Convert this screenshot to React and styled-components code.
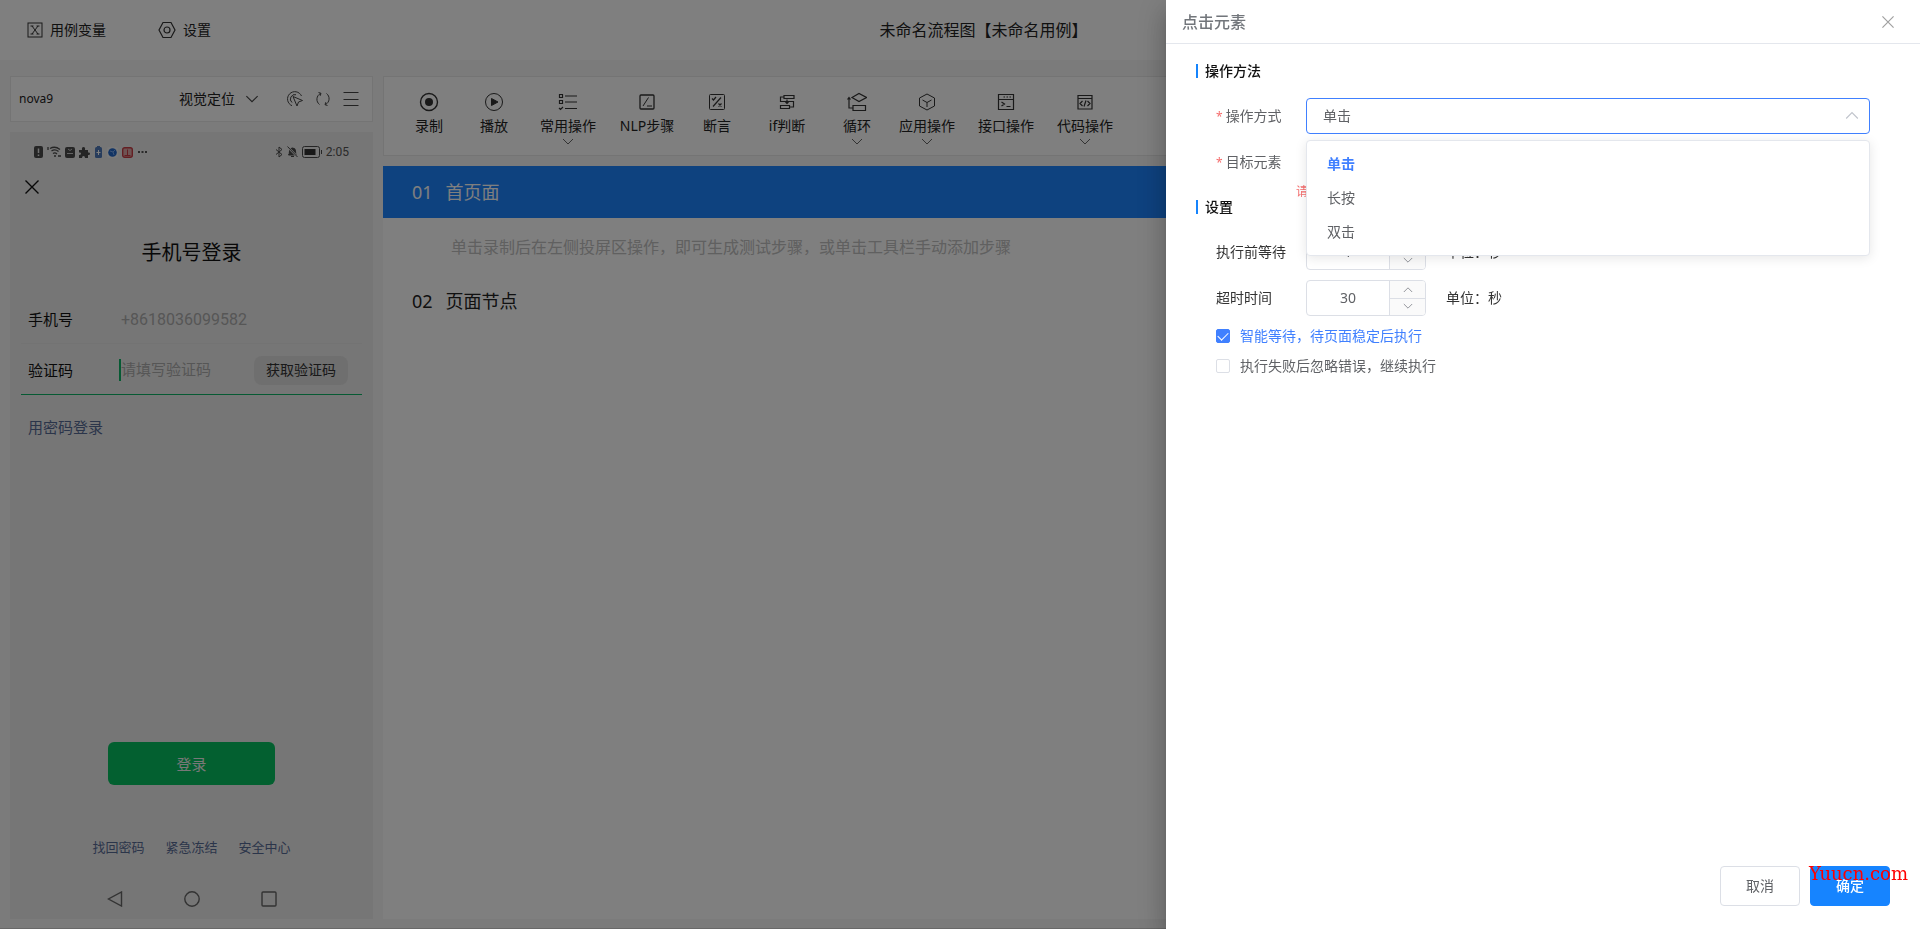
import React, { useState } from "react";
import styled, { createGlobalStyle } from "styled-components";

const GlobalStyle = createGlobalStyle`
  * {
    box-sizing: border-box;
  }
  body {
    margin: 0;
    font-family: "Noto Sans", "Noto Sans CJK SC", sans-serif;
    font-size: 14px;
    line-height: 20px;
    color: #222;
  }
  button, input, select {
    font-family: inherit;
    font-size: inherit;
    line-height: inherit;
    color: inherit;
    margin: 0;
    padding: 0;
    border: none;
    outline: none;
    background: none;
  }
  button {
    cursor: pointer;
  }
  a {
    text-decoration: none;
  }
  svg {
    display: block;
    flex-shrink: 0;
  }
`;

const Page = styled.div`
  display: flex;
  flex-direction: column;
  min-height: 100vh;
  background: #f6f6f6;
  border-bottom: 1px solid #d0d0d0;
`;

/* ---------- 顶部栏 ---------- */
const Header = styled.header`
  display: flex;
  align-items: center;
  justify-content: space-between;
  height: 60px;
  padding: 0 24px 0 27px;
  background: #fff;
`;

const HeaderSide = styled.div`
  display: flex;
  gap: 52px;
  min-width: 140px;
`;

const HeaderButton = styled.button`
  display: flex;
  align-items: center;
  gap: 7px;
`;

const FlowTitle = styled.h1`
  margin: 0;
  font-size: 16px;
  font-weight: 400;
`;

const Content = styled.div`
  flex: 1;
  display: flex;
  gap: 10px;
  padding: 16px 10px 9px;
`;

/* ---------- 投屏区 ---------- */
const DevicePanel = styled.aside`
  display: flex;
  flex-direction: column;
  gap: 10px;
  width: 363px;
`;

const DeviceBar = styled.div`
  display: flex;
  align-items: center;
  height: 46px;
  padding: 0 13px 0 8px;
  background: #fff;
  border: 1px solid #e8e8e8;
`;

const DeviceName = styled.span`
  flex: 1;
  font-size: 12px;
`;

const LocateButton = styled.button`
  display: flex;
  align-items: center;
  gap: 10px;
  margin-right: 28px;
`;

const DeviceTools = styled.div`
  display: flex;
  align-items: center;
  gap: 12px;
`;

const Phone = styled.section`
  flex: 1;
  display: flex;
  flex-direction: column;
  padding: 10px 11px 12px;
  background: #ececec;
  color: #111;
`;

const StatusBar = styled.div`
  display: flex;
  align-items: center;
  justify-content: space-between;
  height: 20px;
  padding: 0 13px;
  font-family: Roboto, sans-serif;
  font-size: 12px;
  color: #555;
`;

const StatusGroup = styled.div`
  display: flex;
  align-items: center;
  gap: 4px;
`;

const PhoneClose = styled.button`
  width: 14px;
  height: 24px;
  margin: 13px 0 0 4px;
`;

const PhoneTitle = styled.h2`
  margin: 40px 0 26px;
  font-size: 20px;
  line-height: 28px;
  font-weight: 400;
  text-align: center;
`;

const PhoneRow = styled.div`
  display: flex;
  align-items: center;
  height: 51px;
  padding: 2px 14px 0 7px;
  font-size: 15px;
  border-bottom: 1px solid ${({ $active }) => ($active ? "#0cb466" : "#e6e6e6")};
`;

const PhoneLabel = styled.label`
  width: 91px;
`;

const PhoneInput = styled.input`
  flex: 1;
  min-width: 0;
  height: 22px;
  font-family: Roboto, "Noto Sans CJK SC", sans-serif;
  font-size: ${({ $size }) => $size};
  color: #adadad;
  border-left: 2px solid ${({ $caret }) => ($caret ? "#0cb466" : "transparent")};
  &::placeholder {
    color: #adadad;
    opacity: 1;
  }
`;

const CodeButton = styled.button`
  width: 94px;
  height: 29px;
  border-radius: 8px;
  background: #dedede;
  font-size: 14px;
  color: #333;
`;

const PasswordLink = styled.a`
  margin: 22px 0 0 7px;
  font-size: 15px;
  color: #576b95;
`;

const LoginButton = styled.button`
  width: 167px;
  height: 43px;
  margin: auto auto 0;
  border-radius: 6px;
  background: #07c160;
  font-size: 15px;
  color: #f0f0f0;
`;

const PhoneLinks = styled.nav`
  display: flex;
  justify-content: center;
  gap: 21px;
  margin-top: 52px;
  font-size: 13px;
  a {
    color: #576b95;
  }
`;

const PhoneNav = styled.div`
  display: flex;
  justify-content: center;
  gap: 61px;
  margin-top: 34px;
`;

/* ---------- 流程区 ---------- */
const FlowPanel = styled.main`
  flex: 1;
  display: flex;
  flex-direction: column;
  gap: 10px;
`;

const ToolBar = styled.div`
  display: flex;
  align-items: flex-start;
  gap: 23px;
  height: 80px;
  padding: 15px 26px 0;
  background: #fff;
  border: 1px solid #e8e8e8;
`;

const ToolButton = styled.button`
  display: flex;
  flex-direction: column;
  align-items: center;
  width: ${({ $width }) => $width};
  white-space: nowrap;
`;

const ToolLabel = styled.span`
  margin: 4px 0 2px;
`;

const StepList = styled.div`
  flex: 1;
  background: #fff;
`;

const StepRow = styled.div`
  display: flex;
  align-items: center;
  gap: 13px;
  height: 52px;
  padding: 0 29px;
  font-size: 18px;
  color: ${({ $active }) => ($active ? "#fff" : "#222")};
  background: ${({ $active }) => ($active ? "#1c84ff" : "#fff")};
`;

const StepHint = styled.p`
  margin: 0;
  padding: 2px 0 0 68px;
  font-size: 16px;
  line-height: 55px;
  color: #c0c0c0;
`;

/* ---------- 抽屉 ---------- */
const Mask = styled.div`
  position: fixed;
  inset: 0;
  background: rgba(0, 0, 0, 0.5);
`;

const Drawer = styled.aside`
  position: fixed;
  top: 0;
  right: 0;
  bottom: 0;
  display: flex;
  flex-direction: column;
  width: min(754px, 100vw);
  background: #fff;
  box-shadow: 0 8px 10px -5px rgba(0, 0, 0, 0.2),
    0 16px 24px 2px rgba(0, 0, 0, 0.14), 0 6px 30px 5px rgba(0, 0, 0, 0.12);
`;

const DrawerHeader = styled.div`
  display: flex;
  align-items: center;
  justify-content: space-between;
  height: 44px;
  padding: 0 26px 0 16px;
  border-bottom: 1px solid #e4e7ed;
`;

const DrawerTitle = styled.h2`
  margin: 0;
  font-size: 16px;
  font-weight: 500;
  color: #72767b;
`;

const DrawerBody = styled.form`
  flex: 1;
  display: flex;
  flex-direction: column;
  padding: 0 30px 23px;
`;

const SectionTitle = styled.h3`
  display: flex;
  align-items: center;
  gap: 7px;
  margin: 17px 0;
  font-size: 14px;
  font-weight: 500;
  color: #111;
  &::before {
    content: "";
    width: 2px;
    height: 14px;
    background: #1684fc;
  }
`;

const Fields = styled.div`
  display: flex;
  flex-direction: column;
  gap: 10px;
  padding: 0 20px;
`;

const Field = styled.div`
  display: flex;
  align-items: center;
  height: 36px;
`;

const FieldLabel = styled.label`
  width: 90px;
  color: ${({ $required }) => ($required ? "#606266" : "#333")};
  &::before {
    content: ${({ $required }) => ($required ? '"*"' : "none")};
    margin-right: 3px;
    font-size: 12px;
    color: #f56c6c;
  }
`;

const FieldControl = styled.div`
  position: relative;
  flex: 1;
  display: flex;
`;

const Select = styled.select`
  appearance: none;
  width: 100%;
  height: 36px;
  padding: 0 16px;
  border: 1px solid #4080ff;
  border-radius: 4px;
  background: #fff;
  color: #606266;
`;

const SelectArrow = styled.span`
  position: absolute;
  top: 11px;
  right: 11px;
  pointer-events: none;
`;

const Options = styled.ul`
  position: absolute;
  z-index: 10;
  top: 42px;
  left: 0;
  right: 0;
  margin: 0;
  padding: 6px 0;
  list-style: none;
  background: #fff;
  border: 1px solid #e4e7ed;
  border-radius: 4px;
  box-shadow: 0 2px 12px rgba(0, 0, 0, 0.1);
`;

const Option = styled.li`
  padding: 0 20px;
  line-height: 34px;
  cursor: pointer;
  font-weight: ${({ $selected }) => ($selected ? 700 : 400)};
  color: ${({ $selected }) => ($selected ? "#4080ff" : "#606266")};
`;

const TextInput = styled.input`
  width: 100%;
  height: 36px;
  padding: 0 16px;
  border: 1px solid #f56c6c;
  border-radius: 4px;
`;

const FieldError = styled.span`
  position: absolute;
  top: 40px;
  left: -10px;
  font-size: 12px;
  line-height: 16px;
  color: #f56c6c;
`;

const NumberBox = styled.div`
  display: flex;
  width: 120px;
  height: 36px;
  margin-right: 20px;
  border: 1px solid #dcdfe6;
  border-radius: 4px;
  overflow: hidden;
`;

const NumberInput = styled.input`
  flex: 1;
  min-width: 0;
  text-align: center;
  color: #606266;
`;

const Stepper = styled.div`
  display: grid;
  width: 36px;
  border-left: 1px solid #dcdfe6;
  background: #fafafa;
  button {
    display: grid;
    place-items: center;
  }
  button + button {
    border-top: 1px solid #dcdfe6;
  }
`;

const Unit = styled.span`
  color: #333;
`;

const Checks = styled.div`
  margin-top: 5px;
  padding: 0 20px;
`;

const CheckLabel = styled.label`
  display: flex;
  align-items: center;
  gap: 10px;
  height: 30px;
  color: #606266;
  &:has(input:checked) {
    color: #4080ff;
  }
`;

const CheckBox = styled.input`
  appearance: none;
  display: grid;
  place-items: center;
  width: 14px;
  height: 14px;
  border: 1px solid #dcdfe6;
  border-radius: 2px;
  background: #fff;
  &:checked {
    border-color: #4080ff;
    background: #4080ff;
  }
  &:checked::after {
    content: "";
    width: 5px;
    height: 9px;
    margin-bottom: 2px;
    border: solid #fff;
    border-width: 0 1px 1px 0;
    transform: rotate(45deg);
  }
`;

const Footer = styled.div`
  display: flex;
  justify-content: flex-end;
  gap: 10px;
  margin-top: auto;
`;

const FooterButton = styled.button`
  width: 80px;
  height: 40px;
  border-radius: 4px;
  border: 1px solid ${({ $primary }) => ($primary ? "#1684ff" : "#dcdfe6")};
  background: ${({ $primary }) => ($primary ? "#1684ff" : "#fff")};
  color: ${({ $primary }) => ($primary ? "#fff" : "#606266")};
  font-weight: ${({ $primary }) => ($primary ? 500 : 400)};
`;

const SiteMark = styled.span`
  position: fixed;
  right: 12px;
  bottom: 45px;
  font-family: "DejaVu Serif", serif;
  font-size: 18px;
  color: #ff0000;
  pointer-events: none;
`;

/* ---------- 图标 ---------- */
const Icon = ({ size = 20, height, width = 1, color = "#333", box = "0 0 20 20", children }) => (
  <svg
    width={size}
    height={height || size}
    viewBox={box}
    fill="none"
    stroke={color}
    strokeWidth={width}
    aria-hidden="true"
  >
    {children}
  </svg>
);

const Chevron = ({ w = 12, h = 8, up, color = "#666" }) => (
  <Icon size={w} height={h} box="0 0 12 8" color={color}>
    <path d={up ? "M1 7L6 2L11 7" : "M1 1L6 6L11 1"} />
  </Icon>
);

const Cross = ({ size = 14, color }) => (
  <Icon size={size} box="0 0 14 14" color={color} width={1.4}>
    <path d="M.5 .5L13.5 13.5M13.5 .5L.5 13.5" />
  </Icon>
);

const TOOLS = [
  {
    name: "录制",
    width: "38px",
    icon: (
      <>
        <circle cx="10" cy="10" r="8.5" strokeWidth="1.4" />
        <circle cx="10" cy="10" r="4" fill="#333" stroke="none" />
      </>
    ),
  },
  {
    name: "播放",
    width: "46px",
    icon: (
      <>
        <circle cx="10" cy="10" r="8.5" />
        <path d="M7.5 6.5L14 10L7.5 13.5Z" fill="#333" />
      </>
    ),
  },
  {
    name: "常用操作",
    width: "56px",
    more: true,
    icon: (
      <path d="M1.5 2.5h3v3h-3zM1.5 8.5h3v3h-3zM1 16l1.5 1.5L5 15M7 4h12M7 10h12M7 16.5h12" strokeWidth="1.2" />
    ),
  },
  {
    name: "NLP步骤",
    width: "56px",
    icon: (
      <>
        <rect x="3" y="3" width="14" height="14" rx="1" strokeWidth="1.3" />
        <path d="M6 14L11.5 5.5M10 14h5" />
      </>
    ),
  },
  {
    name: "断言",
    width: "38px",
    icon: (
      <>
        <rect x="2.5" y="2.5" width="15" height="15" rx="1" />
        <path d="M6 14.5L14 5.5M5 6.5l1.5 1.5L9 5M11.5 11.5l3 3M14.5 11.5l-3 3" strokeWidth="1.2" />
      </>
    ),
  },
  {
    name: "if判断",
    width: "56px",
    icon: (
      <path
        d="M7 3.5h10v3H7zM3.5 13.5h9v3h-9zM7 5H3.5v4.5h13V15h-4M10 7.5v4M8.5 10l1.5 1.5L11.5 10"
        strokeWidth="1.2"
      />
    ),
  },
  {
    name: "循环",
    width: "38px",
    more: true,
    icon: (
      <path d="M5 5.5L12 1.5L19.5 5.5L12 9.5ZM6 13.5h12.5v5H6zM5.5 16H2V6M.5 7.5L2 5.5L3.5 7.5" strokeWidth="1.2" />
    ),
  },
  {
    name: "应用操作",
    width: "56px",
    more: true,
    icon: <path d="M10 2L17.5 6V14L10 18L2.5 14V6ZM5.5 8L10 10.5L14.5 8M10 10.5V15" />,
  },
  {
    name: "接口操作",
    width: "56px",
    icon: (
      <path
        d="M2.5 2.5h15v15h-15zM2.5 7.5h15M7.5 5h1.5M10.5 5H12M13.5 5H15M5.5 10l3 2l-3 2M10.5 14.5h4"
        strokeWidth="1.2"
      />
    ),
  },
  {
    name: "代码操作",
    width: "56px",
    more: true,
    icon: (
      <path
        d="M3 3.5h14v13.5H3zM3 6.5h14M7.5 9L5 11.500L7.500 14M12.500 9L15 11.500L12.500 14M11 8.500l-2 6"
        strokeWidth="1.2"
      />
    ),
  },
];

const METHODS = ["单击", "长按", "双击"];

const NumberField = ({ id, label, value, onChange }) => (
  <Field>
    <FieldLabel htmlFor={id}>{label}</FieldLabel>
    <NumberBox>
      <NumberInput id={id} value={value} onChange={(e) => onChange(Number(e.target.value) || 0)} />
      <Stepper>
        <button type="button" aria-label="增加" onClick={() => onChange(value + 1)}>
          <Chevron w={10} h={7} up color="#808289" />
        </button>
        <button type="button" aria-label="减少" onClick={() => onChange(value - 1)}>
          <Chevron w={10} h={7} color="#808289" />
        </button>
      </Stepper>
    </NumberBox>
    <Unit>单位：秒</Unit>
  </Field>
);

const PhoneScreen = () => (
  <Phone>
    <StatusBar>
      <StatusGroup>
        <Icon size={9} height={12} box="0 0 9 12" color="none">
          <rect width="9" height="12" rx="2" fill="#4a4a4a" />
          <path d="M4.500 2.500v4.500M4.500 8.500v1.500" stroke="#e4e4e4" strokeWidth="1.500" />
        </Icon>
        <Icon size={14} height={12} box="0 0 14 12" color="#4a4a4a" width={1.3}>
          <path d="M1 1v3M3 2.500Q8 -.5 13 3.500M4.500 5Q8 2.500 11.500 5.500M6 7.500Q8 6 10 8M11 10h3" />
          <circle cx="8" cy="10" r="1" fill="#4a4a4a" stroke="none" />
        </Icon>
        <Icon size={10} height={11} box="0 0 10 11" color="none">
          <rect width="10" height="11" rx="2" fill="#4a4a4a" />
          <path d="M3 2Q5 5 7 2M2 6.500h6" stroke="#c8c8c8" />
        </Icon>
        <Icon size={11} box="0 0 11 11" color="none">
          <path
            d="M0 3h3Q2.500 0 4.500 0T6 3h3v2.500q2-.500 2 1.200T9 8v3H6Q6 9 4.500 9T3 11H0V8q2 0 2-1.500T0 5.500Z"
            fill="#4a4a4a"
          />
        </Icon>
        <Icon size={9} height={12} box="0 0 9 12" color="none">
          <rect x="1" y="1" width="7" height="11" rx="1.500" fill="#4f79b8" />
          <path d="M3 0h3v1H3z" fill="#4f79b8" />
          <path d="M4.500 4v5M2.500 6.500h4" stroke="#fff" />
        </Icon>
        <Icon size={11} box="0 0 11 11" color="none">
          <rect width="11" height="11" rx="2" fill="#f4f4f4" />
          <circle cx="5.500" cy="5.500" r="4.300" fill="#2468c8" />
          <path d="M3 4l3 1l2-2M6 5l1 3" stroke="#78a8ec" />
        </Icon>
        <Icon size={11} box="0 0 11 11" color="none">
          <rect x=".7" y=".7" width="9.600" height="9.600" rx="2" fill="#dca8a8" stroke="#c83c44" strokeWidth="1.400" />
          <path d="M5.500 2.500v5.500M2.500 8.500h6" stroke="#c83c44" />
        </Icon>
        <Icon size={10} height={4} box="0 0 10 4" color="none">
          <path d="M1 1h2v2H1zM4.500 1h2v2h-2zM8 1h2v2H8z" fill="#555" />
        </Icon>
      </StatusGroup>
      <StatusGroup>
        <Icon size={8} height={12} box="0 0 8 12" color="#4a4a4a">
          <path d="M1 3.500l6 5L4 11V1l3 2.500l-6 5" />
        </Icon>
        <Icon size={11} height={12} box="0 0 11 12" color="#4a4a4a">
          <path d="M1.500 9Q2.500 8 2.500 5T5.500 2T8.500 5T9.500 9ZM4 10.500h3" fill="#4a4a4a" />
          <path d="M.5 .5L10.500 11" stroke="#ececec" strokeWidth="2" />
          <path d="M.5 .5L10.500 11" />
        </Icon>
        <Icon size={20} height={12} box="0 0 20 12" color="#4a4a4a">
          <rect x=".5" y=".5" width="17" height="11" rx="2" />
          <path d="M2.500 3h11v6h-11z" fill="#333" stroke="none" />
          <path d="M19.500 4v4" />
        </Icon>
        <span>2:05</span>
      </StatusGroup>
    </StatusBar>
    <PhoneClose type="button" aria-label="关闭页面">
      <Cross color="#111" />
    </PhoneClose>
    <PhoneTitle>手机号登录</PhoneTitle>
    <PhoneRow>
      <PhoneLabel htmlFor="phone">手机号</PhoneLabel>
      <PhoneInput id="phone" $size="16px" defaultValue="+8618036099582" />
    </PhoneRow>
    <PhoneRow $active>
      <PhoneLabel htmlFor="code">验证码</PhoneLabel>
      <PhoneInput id="code" $size="15px" $caret placeholder="请填写验证码" />
      <CodeButton type="button">获取验证码</CodeButton>
    </PhoneRow>
    <PasswordLink href="#password">用密码登录</PasswordLink>
    <LoginButton type="button">登录</LoginButton>
    <PhoneLinks>
      <a href="#find">找回密码</a>
      <a href="#freeze">紧急冻结</a>
      <a href="#safe">安全中心</a>
    </PhoneLinks>
    <PhoneNav>
      <Icon size={16} box="0 0 16 16" color="#666" width={1.4}>
        <path d="M14.500 1V15L1.500 8Z" />
      </Icon>
      <Icon size={16} box="0 0 16 16" color="#666" width={1.4}>
        <circle cx="8" cy="8" r="7.200" />
      </Icon>
      <Icon size={16} box="0 0 16 16" color="#666" width={1.4}>
        <rect x="1" y="1" width="14" height="14" rx="1" />
      </Icon>
    </PhoneNav>
  </Phone>
);

const App = () => {
  const [method, setMethod] = useState("单击");
  const [waitTime, setWaitTime] = useState(1);
  const [timeout, setTimeoutValue] = useState(30);

  return (
    <>
      <GlobalStyle />
      <Page>
        <Header>
          <HeaderSide>
            <HeaderButton type="button">
              <Icon size={16} box="0 0 16 16">
                <rect x="1" y="1" width="14" height="14" />
                <path d="M5 4L11 12M11 4L5 12M3.500 4h3M9.500 4h3M3.500 12h3M9.500 12h3" />
              </Icon>
              用例变量
            </HeaderButton>
            <HeaderButton type="button">
              <Icon size={18} box="0 0 18 18" width={1.2}>
                <path d="M5 1.500h8L17 9L13 16.500H5L1 9Z" />
                <circle cx="9" cy="9" r="3" />
              </Icon>
              设置
            </HeaderButton>
          </HeaderSide>
          <FlowTitle>未命名流程图【未命名用例】</FlowTitle>
          <HeaderSide />
        </Header>
        <Content>
          <DevicePanel>
            <DeviceBar>
              <DeviceName>nova9</DeviceName>
              <LocateButton type="button">
                视觉定位
                <Chevron w={14} h={9} color="#444" />
              </LocateButton>
              <DeviceTools>
                <Icon size={16} box="0 0 16 16" color="#444">
                  <path d="M5 14.700A7.300 7.300 0 1 1 14.500 5M5 11.500A4.500 4.500 0 0 1 9 3.700" />
                  <path d="M6 5.500L15.500 9.500L11.500 11L10 15Z" />
                </Icon>
                <Icon size={16} box="0 0 16 16" color="#444">
                  <path d="M4.500 13.500A6.500 6.500 0 0 1 5.500 2.500M11.500 2.500A6.500 6.500 0 0 1 10.500 13.500M3.500 1.500l2.500 .8l-.8 2.500M12.500 14.500l-2.500-.8l.8-2.500" />
                </Icon>
                <Icon size={16} box="0 0 16 16" color="#444">
                  <path d="M.5 1.500h15M.5 8.500h15M.5 14.500h15" />
                </Icon>
              </DeviceTools>
            </DeviceBar>
            <PhoneScreen />
          </DevicePanel>
          <FlowPanel>
            <ToolBar>
              {TOOLS.map((tool) => (
                <ToolButton type="button" key={tool.name} $width={tool.width}>
                  <Icon>{tool.icon}</Icon>
                  <ToolLabel>{tool.name}</ToolLabel>
                  {tool.more && <Chevron />}
                </ToolButton>
              ))}
            </ToolBar>
            <StepList>
              <StepRow $active>
                <span>01</span>
                <span>首页面</span>
              </StepRow>
              <StepHint>单击录制后在左侧投屏区操作，即可生成测试步骤，或单击工具栏手动添加步骤</StepHint>
              <StepRow>
                <span>02</span>
                <span>页面节点</span>
              </StepRow>
            </StepList>
          </FlowPanel>
        </Content>
      </Page>
      <Mask />
      <Drawer>
        <DrawerHeader>
          <DrawerTitle>点击元素</DrawerTitle>
          <button type="button" aria-label="关闭">
            <Cross size={12} color="#a0a0a0" />
          </button>
        </DrawerHeader>
        <DrawerBody onSubmit={(e) => e.preventDefault()}>
          <SectionTitle>操作方法</SectionTitle>
          <Fields>
            <Field>
              <FieldLabel htmlFor="method" $required>操作方式</FieldLabel>
              <FieldControl>
                <Select id="method" value={method} onChange={(e) => setMethod(e.target.value)}>
                  {METHODS.map((name) => (
                    <option key={name}>{name}</option>
                  ))}
                </Select>
                <SelectArrow>
                  <Chevron w={14} h={12} up color="#c0c4cc" />
                </SelectArrow>
                <Options>
                  {METHODS.map((name) => (
                    <Option key={name} $selected={name === method} onClick={() => setMethod(name)}>
                      {name}
                    </Option>
                  ))}
                </Options>
              </FieldControl>
            </Field>
            <Field>
              <FieldLabel htmlFor="target" $required>目标元素</FieldLabel>
              <FieldControl>
                <TextInput id="target" />
                <FieldError>请选择目标元素</FieldError>
              </FieldControl>
            </Field>
          </Fields>
          <SectionTitle>设置</SectionTitle>
          <Fields>
            <NumberField id="wait" label="执行前等待" value={waitTime} onChange={setWaitTime} />
            <NumberField id="timeout" label="超时时间" value={timeout} onChange={setTimeoutValue} />
          </Fields>
          <Checks>
            <CheckLabel>
              <CheckBox type="checkbox" defaultChecked />
              智能等待，待页面稳定后执行
            </CheckLabel>
            <CheckLabel>
              <CheckBox type="checkbox" />
              执行失败后忽略错误，继续执行
            </CheckLabel>
          </Checks>
          <Footer>
            <FooterButton type="button">取消</FooterButton>
            <FooterButton type="submit" $primary>确定</FooterButton>
          </Footer>
        </DrawerBody>
      </Drawer>
      <SiteMark>Yuucn.com</SiteMark>
    </>
  );
};

export default App;
